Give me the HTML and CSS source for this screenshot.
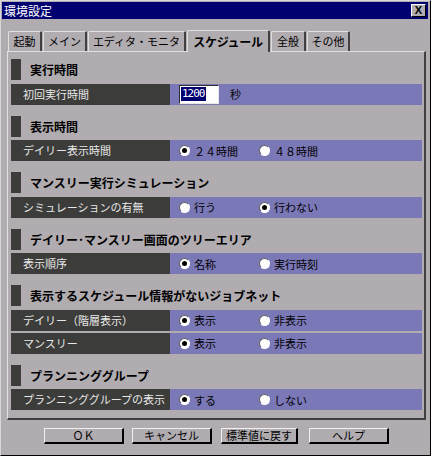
FILE: index.html
```html
<!DOCTYPE html>
<html lang="ja">
<head>
  <meta charset="utf-8" />
  <title>環境設定</title>
  <link rel="stylesheet" href="styles.css">
</head>
<body>
  <div class="win">
    <div class="titlebar">
      <span class="title">環境設定</span>
      <span class="close">X</span>
    </div>

    <div class="tabs">
      <span class="tab t1">起動</span>
      <span class="tab t2">メイン</span>
      <span class="tab t3">エディタ・モニタ</span>
      <span class="tab t4 on">スケジュール</span>
      <span class="tab t5">全般</span>
      <span class="tab t6">その他</span>
    </div>

    <div class="panel">
      <div class="sec">
        <div class="head"><span class="mark"></span>実行時間</div>
        <div class="row">
          <div class="lbl">初回実行時間</div>
          <div class="val">
            <span class="inp"><span class="sel">1200</span></span>
            <span class="unit">秒</span>
          </div>
        </div>
      </div>

      <div class="sec">
        <div class="head"><span class="mark"></span>表示時間</div>
        <div class="row">
          <div class="lbl">デイリー表示時間</div>
          <div class="val">
            <span class="opt"><span class="radio on"></span>２４時間</span>
            <span class="opt"><span class="radio"></span>４８時間</span>
          </div>
        </div>
      </div>

      <div class="sec">
        <div class="head"><span class="mark"></span>マンスリー実行シミュレーション</div>
        <div class="row">
          <div class="lbl">シミュレーションの有無</div>
          <div class="val">
            <span class="opt"><span class="radio"></span>行う</span>
            <span class="opt"><span class="radio on"></span>行わない</span>
          </div>
        </div>
      </div>

      <div class="sec">
        <div class="head"><span class="mark"></span>デイリー･マンスリー画面のツリーエリア</div>
        <div class="row">
          <div class="lbl">表示順序</div>
          <div class="val">
            <span class="opt"><span class="radio on"></span>名称</span>
            <span class="opt"><span class="radio"></span>実行時刻</span>
          </div>
        </div>
      </div>

      <div class="sec">
        <div class="head"><span class="mark"></span>表示するスケジュール情報がないジョブネット</div>
        <div class="row">
          <div class="lbl">デイリー（階層表示）</div>
          <div class="val">
            <span class="opt"><span class="radio on"></span>表示</span>
            <span class="opt"><span class="radio"></span>非表示</span>
          </div>
        </div>
        <div class="row">
          <div class="lbl">マンスリー</div>
          <div class="val">
            <span class="opt"><span class="radio on"></span>表示</span>
            <span class="opt"><span class="radio"></span>非表示</span>
          </div>
        </div>
      </div>

      <div class="sec last">
        <div class="head"><span class="mark"></span>プランニンググループ</div>
        <div class="row">
          <div class="lbl">プランニンググループの表示</div>
          <div class="val">
            <span class="opt"><span class="radio on"></span>する</span>
            <span class="opt"><span class="radio"></span>しない</span>
          </div>
        </div>
      </div>
    </div>

    <div class="buttons">
      <span class="btn b1">ＯＫ</span>
      <span class="btn b2">キャンセル</span>
      <span class="btn b3">標準値に戻す</span>
      <span class="btn b4">ヘルプ</span>
    </div>
  </div>
</body>
</html>
```

FILE: styles.css
```css
:root{
  --bg:#b0acb0; --dark:#3c3c3a; --purple:#7b78b8; --navy:#000070;
  --hi:#e8e8e8; --lo:#404040;
}
*{box-sizing:border-box;margin:0;padding:0}
body{background:var(--bg);font-family:"Noto Sans CJK JP","Noto Sans",sans-serif;font-size:11px;color:#000}
.win{width:431px;height:456px;background:var(--bg);border:1px solid #d8d8d8;border-right-color:#000;border-bottom-color:#000;padding:1px 2px 0 1px;display:flex;flex-direction:column;overflow:hidden}

.titlebar{height:17px;background:var(--navy);color:#fff;display:flex;align-items:center;justify-content:space-between;padding:0 2px 0 2px}
.title{font-size:12px;line-height:17px}
.close{width:15px;height:13px;background:var(--bg);border:1px solid #fff;border-right-color:#000;border-bottom-color:#000;color:#000;font-family:"Liberation Sans",sans-serif;font-weight:700;font-size:11px;line-height:11px;text-align:center}

.tabs{display:flex;align-items:flex-end;height:32px;padding-left:6px}
.tab{height:20px;border:1px solid #e0e0e0;border-bottom:none;border-right:2px solid var(--lo);border-radius:2px 2px 0 0;line-height:19px;font-size:11px;margin-right:1px;white-space:nowrap;text-align:center;overflow:hidden}
.t1{width:34px}
.t2{width:44px}
.t3{width:98px}
.t4{width:83px}
.t5{width:35px}
.t6{width:43px}
.tab.on{height:22px;font-weight:700;font-size:12px;line-height:21px;letter-spacing:-.3px;position:relative;top:1px;background:var(--bg)}

.panel{width:419px;height:369px;margin-left:5px;border:1px solid #e0e0e0;border-right:2px solid var(--lo);border-bottom:2px solid var(--lo);padding:7px 2px 0 3px}
.sec{margin-bottom:11px}
.sec.last{margin-top:2px}
.head{height:21px;display:flex;align-items:center;font-weight:700;font-size:12px;margin-bottom:3.5px;white-space:nowrap}
.mark{width:10px;height:21px;background:var(--dark);margin-right:9px}
.row{height:21px;display:flex;margin-bottom:2px}
.lbl{width:159px;background:var(--dark);color:var(--hi);padding-left:12px;line-height:21px;white-space:nowrap;font-size:11px}
.val{flex:1;background:var(--purple);display:flex;align-items:center;padding-left:9px}

.inp{width:40px;height:19px;background:#fff;border:1px solid #303030;border-right-color:#e8e8e8;border-bottom-color:#e8e8e8;padding:1px 0 0 1px;display:flex;align-items:flex-start}
.sel{background:var(--navy);color:#fff;font-family:"DejaVu Sans Mono",monospace;font-size:11px;line-height:14px;padding:0 1px;letter-spacing:-1px}
.unit{margin-left:11px}

.opt{width:80px;display:flex;align-items:center}
.radio{width:11px;height:11px;border-radius:50%;background:#fff;border:1px solid #606060;border-right-color:#fff;border-bottom-color:#fff;margin-right:4px;display:flex;align-items:center;justify-content:center}
.radio.on::after{content:"";width:5px;height:5px;border-radius:50%;background:#000}

.buttons{display:flex;padding-left:42px;margin-top:8px}
.btn{height:16px;border:1px solid #f0f0f0;border-right:2px solid #000;border-bottom:2px solid #000;text-align:center;line-height:13px;font-size:11px}
.b1{width:80px;margin-right:8px}
.b2{width:80px;margin-right:9px}
.b3{width:77px;margin-right:11px}
.b4{width:80px}
```
